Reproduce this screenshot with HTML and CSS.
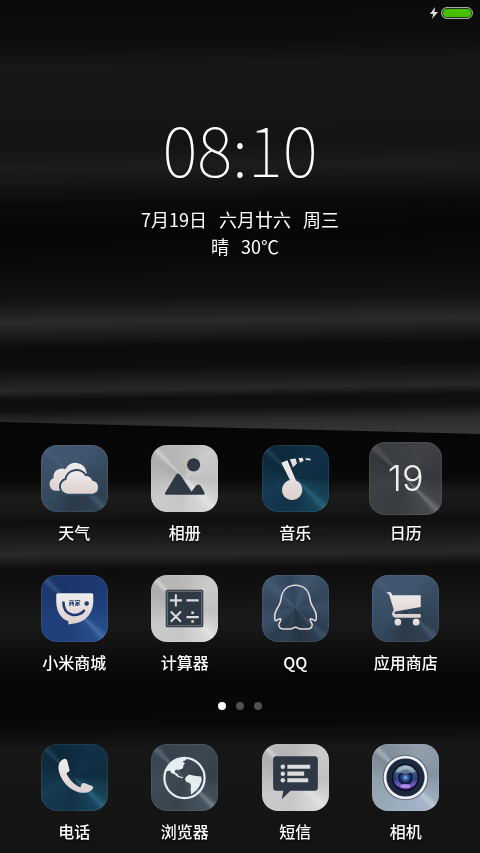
FILE: index.html
```html
<!DOCTYPE html>
<html lang="zh-CN">
<head>
    <meta charset="UTF-8">
    <meta name="viewport" content="width=device-width, initial-scale=1.0">
    <title>桌面</title>
    <link rel="stylesheet" href="styles.css">
</head>
<body>
    <svg class="wallpaper" viewBox="0 0 480 853" preserveAspectRatio="none" aria-hidden="true">
        <defs>
            <linearGradient id="folds" gradientUnits="userSpaceOnUse" x1="0" y1="0" x2="12" y2="856">
                <stop offset="0" stop-color="#0a0a0a"/>
                <stop offset=".05" stop-color="#0d0d0d"/>
                <stop offset=".08" stop-color="#171717"/>
                <stop offset=".13" stop-color="#171717"/>
                <stop offset=".17" stop-color="#131313"/>
                <stop offset=".197" stop-color="#1c1c1c"/>
                <stop offset=".22" stop-color="#131313"/>
                <stop offset=".24" stop-color="#0a0a0a"/>
                <stop offset=".27" stop-color="#060606"/>
                <stop offset=".31" stop-color="#0a0a0a"/>
                <stop offset=".35" stop-color="#121212"/>
                <stop offset=".378" stop-color="#2a2a2a"/>
                <stop offset=".392" stop-color="#1c1c1c"/>
                <stop offset=".408" stop-color="#0b0b0b"/>
                <stop offset=".43" stop-color="#0d0d0d"/>
                <stop offset=".445" stop-color="#1c1c1c"/>
                <stop offset=".457" stop-color="#272727"/>
                <stop offset=".468" stop-color="#0e0e0e"/>
                <stop offset=".48" stop-color="#111"/>
                <stop offset=".495" stop-color="#2c2c2c"/>
                <stop offset=".51" stop-color="#363636"/>
            </linearGradient>
            <linearGradient id="lowerFolds" gradientUnits="userSpaceOnUse" x1="0" y1="420" x2="4" y2="855">
                <stop offset="0" stop-color="#050505"/>
                <stop offset=".14" stop-color="#080808"/>
                <stop offset=".18" stop-color="#1b1b1b"/>
                <stop offset=".215" stop-color="#161616"/>
                <stop offset=".235" stop-color="#0f0f0f"/>
                <stop offset=".27" stop-color="#191919"/>
                <stop offset=".31" stop-color="#292929"/>
                <stop offset=".345" stop-color="#0d0d0d"/>
                <stop offset=".4" stop-color="#121212"/>
                <stop offset=".47" stop-color="#191919"/>
                <stop offset=".53" stop-color="#101010"/>
                <stop offset=".6" stop-color="#060606"/>
                <stop offset=".7" stop-color="#080808"/>
                <stop offset=".76" stop-color="#171717"/>
                <stop offset="1" stop-color="#131313"/>
            </linearGradient>
        </defs>
        <rect width="480" height="853" fill="url(#folds)"/>
        <path d="M0 422 Q240 428 480 434 V853 H0z" fill="url(#lowerFolds)"/>
    </svg>

    <header class="status-bar">
        <svg class="bolt" viewBox="0 0 8 12" aria-hidden="true"><path d="M5 0 0 7h3.200L2 12l6-7H4.500z"/></svg>
        <span class="battery"></span>
    </header>

    <main class="home">
        <section class="clock">
            <h1 class="time">08:10</h1>
            <p class="info"><span>7月19日</span><span>六月廿六</span><span>周三</span></p>
            <p class="info weather"><span>晴</span><span>30℃</span></p>
        </section>

        <section class="apps">
            <button type="button" class="app">
                <span class="tile slate">
                    <svg viewBox="0 0 66 66" aria-hidden="true">
                        <defs>
                            <linearGradient id="pearl" x1="0" y1="0" x2="0" y2="1">
                                <stop offset="0" stop-color="#eee"/>
                                <stop offset=".5" stop-color="#e8dede"/>
                                <stop offset="1" stop-color="#dccfd0"/>
                            </linearGradient>
                        </defs>
                        <path fill="url(#pearl)" d="M15 45a6.500 6.500 0 0 1-2.500-12.500a8 8 0 0 1 11.500-8.500a11 11 0 0 1 21 3.500L40 40 25 45z"/>
                        <path class="front-cloud" fill="url(#pearl)" d="M26.500 48a7 7 0 0 1-1.500-13.800a10 10 0 0 1 18.500-3.700a7 7 0 0 1 7 4.700a6.500 6.500 0 0 1 .5 12.800z"/>
                    </svg>
                </span>
                <span class="label">天气</span>
            </button>
            <button type="button" class="app">
                <span class="tile silver">
                    <svg viewBox="0 0 66 66" fill="#2e3945" aria-hidden="true">
                        <circle cx="42" cy="19.500" r="6.500"/>
                        <path d="M15 49q-2 0-1-2l10.500-17.500q2-3 4.500 0L40 46l4-5.500q2.500-3 5 0l3.500 6q1 2-1 2.500z"/>
                    </svg>
                </span>
                <span class="label">相册</span>
            </button>
            <button type="button" class="app">
                <span class="tile teal">
                    <svg viewBox="0 0 66 66" fill="url(#pearl)" aria-hidden="true">
                        <path d="M19 17.500l6-2.500 8.500 20a10 10 0 1 1-6-.5z"/>
                        <path d="M27.500 14l5.500-.8 1.500 5-4 4zM36 13l4-.5 1 3-3.500 2zM42.500 13l5 .2.500 2-4.500-.4z"/>
                    </svg>
                </span>
                <span class="label">音乐</span>
            </button>
            <button type="button" class="app">
                <span class="tile graphite calendar">19</span>
                <span class="label">日历</span>
            </button>
            <button type="button" class="app">
                <span class="tile blue">
                    <svg viewBox="0 0 66 66" aria-hidden="true">
                        <path fill="url(#pearl)" d="M16.500 18h33.500q1.500 0 1.500 1.500v6c0 13-9 21.500-20.500 22.500l-4 .8v-3.300C19 43 15 35 15 26v-6.500q0-1.500 1.500-1.500z"/>
                        <path class="smile" d="M22 26c0 16 16 16 21 8.500"/>
                        <circle cx="45" cy="28" r="2.200" fill="#1d3a70"/>
                        <text class="badge-text" x="33" y="30">商家</text>
                    </svg>
                </span>
                <span class="label">小米商城</span>
            </button>
            <button type="button" class="app">
                <span class="tile silver">
                    <svg viewBox="0 0 66 66" aria-hidden="true">
                        <rect x="14.500" y="14.500" width="37" height="37" rx="1.500" fill="#2e3945"/>
                        <rect x="16" y="16" width="34" height="34" fill="none" stroke="#8b9096" stroke-width=".7"/>
                        <g stroke="#dcdcdc" stroke-width="2" fill="none">
                            <path d="M18.500 25h12M24.500 19v12M35 25h12M19.500 36l10 10M29.500 36l-10 10M35 41.500h12"/>
                            <path d="M41 36v2.500M41 44.500V47" stroke-width="2.500"/>
                        </g>
                    </svg>
                </span>
                <span class="label">计算器</span>
            </button>
            <button type="button" class="app">
                <span class="tile slate rays">
                    <svg viewBox="0 0 66 66" fill="none" stroke="#e2d9da" stroke-width="1.500" stroke-linejoin="round" aria-hidden="true">
                        <path d="M33 10C26 10 19.500 14 18.500 25C18 30 13 34 12.500 40C12.500 43 12.500 45.500 14 45C15.500 44.500 16.500 43 18 43C19 43 18.500 45 17.500 46.500C15.500 49 16.500 53 21 53.300H28C30 53.300 31 51.500 33 51.500C35 51.500 36 53.300 38 53.300H45C49.500 53 50.500 49 48.500 46.500C47.500 45 47 43 48 43C49.500 43 50.500 44.500 52 45C53.500 45.500 53.500 43 53.500 40C53 34 48 30 47.500 25C46.500 14 40 10 33 10z"/>
                    </svg>
                </span>
                <span class="label">QQ</span>
            </button>
            <button type="button" class="app">
                <span class="tile slate">
                    <svg viewBox="0 0 66 66" fill="url(#pearl)" aria-hidden="true">
                        <path d="M14 17h4.500l1.500 3h28v11.500L23 36q-2 1.500 0 2.500h25V42H23q-4-1-3-5l1.500-2.500L17 19.500z"/>
                        <circle cx="25.500" cy="46.500" r="3.300"/>
                        <circle cx="43.500" cy="46.500" r="3.300"/>
                    </svg>
                </span>
                <span class="label">应用商店</span>
            </button>
        </section>

        <nav class="pages" aria-label="页面">
            <span class="dot active"></span>
            <span class="dot"></span>
            <span class="dot"></span>
        </nav>
    </main>

    <footer class="dock">
        <button type="button" class="app">
            <span class="tile teal">
                <svg viewBox="0 0 66 66" fill="url(#pearl)" aria-hidden="true">
                    <path d="M23.500 14.500C18 16 16.500 21 17.500 26C20 38 31 48 42 48C47 48 50 46 51.500 43Q51.500 41.500 49 41L42.500 38.500Q40 38 39 42.500C33.500 41 27.500 35 25 28.500Q29 27 28 25L26 17Q25 14 23.500 14.500z"/>
                </svg>
            </span>
            <span class="label">电话</span>
        </button>
        <button type="button" class="app">
            <span class="tile steel">
                <svg viewBox="0 0 66 66" fill="#e6edf1" aria-hidden="true">
                    <circle cx="33" cy="33.500" r="19.800" fill="none" stroke="#e6edf1" stroke-width="2.200"/>
                    <path d="M15 27l2-6 5-5 5-2 8 .5-1 1.500-3 1.500 2.500 1.500-1.500 2-.5 3-4 1.500-2-.3-2 1 .5 2.300 2 .5 1.500 2.500 4 1.200-.3 1-5-1.200-2.700-2.500-3.500-1.500-1.500-2.500z"/>
                    <path d="M34.500 32.500l3-2.500 4 1 3 .5 5 .5.500 4-2.500 6-3.500 4-4.500 4-.5-6 .5-3-1-2.500-3.500-1-1.500-2.500z"/>
                </svg>
            </span>
            <span class="label">浏览器</span>
        </button>
        <button type="button" class="app">
            <span class="tile silver">
                <svg viewBox="0 0 66 66" aria-hidden="true">
                    <path fill="#2e3945" d="M14 12h38q3 0 3 3v28q0 3-3 3H28l-8.500 8.500L21 46h-7q-3 0-3-3V15q0-3 3-3z"/>
                    <g fill="#dcdcdc">
                        <circle cx="20.500" cy="22.500" r="2.200"/>
                        <circle cx="20.500" cy="29.200" r="2.200"/>
                        <circle cx="20.500" cy="35.700" r="2.200"/>
                        <path d="M25 20.500h22.500v4H25zM25 27.200h16.500v4H25zM25 33.700h20.500v4H25z"/>
                    </g>
                </svg>
            </span>
            <span class="label">短信</span>
        </button>
        <button type="button" class="app">
            <span class="tile ice">
                <svg viewBox="0 0 66 66" aria-hidden="true">
                    <defs>
                        <linearGradient id="glass" x1="0" y1="0" x2="0" y2="1">
                            <stop offset="0" stop-color="#a7c0cf"/>
                            <stop offset=".35" stop-color="#31526f"/>
                            <stop offset=".55" stop-color="#263c80"/>
                            <stop offset=".8" stop-color="#7658c8"/>
                            <stop offset="1" stop-color="#31206a"/>
                        </linearGradient>
                        <radialGradient id="iris">
                            <stop offset="0" stop-color="#72bde8"/>
                            <stop offset=".5" stop-color="#315a9f"/>
                            <stop offset="1" stop-color="#18204d"/>
                        </radialGradient>
                    </defs>
                    <circle cx="33" cy="33" r="22.500" fill="#586273"/>
                    <circle cx="33" cy="33" r="21.500" fill="#eef0f3"/>
                    <circle cx="33" cy="33" r="18.800" fill="#1c2740"/>
                    <circle cx="33" cy="33" r="13.500" fill="#0b1020"/>
                    <circle cx="33" cy="33" r="12" fill="url(#glass)"/>
                    <circle cx="33" cy="33" r="8" fill="#171c46" stroke="#5465aa" stroke-width=".8"/>
                    <circle cx="33" cy="33" r="5.500" fill="url(#iris)"/>
                    <path d="M23 27q10-10 20 0-10 4-20 0z" fill="#c5dce4" opacity=".45"/>
                    <ellipse cx="33" cy="41.500" rx="5" ry="2" fill="#c59af4" opacity=".8"/>
                </svg>
            </span>
            <span class="label">相机</span>
        </button>
    </footer>
</body>
</html>
```
FILE: styles.css
```css
* {
    box-sizing: border-box;
}

body {
    margin: 0;
    min-height: 100vh;
    display: flex;
    flex-direction: column;
    background-color: #0a0a0a;
    color: #fff;
    font-family: "Noto Sans CJK SC", sans-serif;
}

.wallpaper {
    position: fixed;
    top: 0;
    left: 0;
    width: 100%;
    height: 100%;
    z-index: -1;
}

.status-bar {
    display: flex;
    justify-content: flex-end;
    align-items: center;
    gap: 3px;
    height: 26px;
    padding: 0 7px;
}

.bolt {
    width: 8px;
    height: 12px;
    fill: #ddd;
}

.battery {
    width: 32px;
    height: 12px;
    border: 1px solid #aaa;
    border-radius: 6px;
    background-color: #47c000;
    box-shadow: inset 0 0 0 1px #283020;
}

.home {
    flex: 1;
    display: flex;
    flex-direction: column;
}

.clock {
    padding-top: 84px;
    text-align: center;
}

.time {
    margin: 0 0 20px;
    font-size: 67px;
    font-weight: 100;
    line-height: 76px;
}

.info {
    display: flex;
    justify-content: center;
    gap: 12px;
    margin: 0;
    font-size: 18px;
    font-weight: 400;
    line-height: 27px;
}

.weather {
    padding-left: 10px;
}

.apps,
.dock {
    display: grid;
    grid-template-columns: repeat(4, 1fr);
    padding: 0 19px;
}

.apps {
    row-gap: 31px;
    margin-top: auto;
}

.dock {
    padding-bottom: 10px;
}

.app {
    display: flex;
    flex-direction: column;
    align-items: center;
    gap: 8px;
    padding: 0;
    border: 0;
    background: none;
    color: inherit;
    font-family: inherit;
    cursor: pointer;
}

.label {
    font-size: 16px;
    font-weight: 500;
    line-height: 24px;
    text-shadow: 0 1px 2px #000;
}

.tile {
    display: block;
    width: 67px;
    height: 67px;
    border-radius: 16px;
    box-shadow: inset 0 0 1px 1px rgba(255, 255, 255, 0.08);
}

.tile svg {
    display: block;
    width: 100%;
    height: 100%;
}

/* brushed metal finishes */
.slate {
    background: conic-gradient(from 135deg, #41566b, #2f4051 8deg, #2b3a49 50deg, #364b60 100deg, #3d536b 172deg, #465c74 180deg, #3f566e 188deg, #40566e 250deg, #34495d 300deg, #2e4051 350deg, #41566b);
}

.rays {
    background: conic-gradient(from 135deg, #3c5064, #2c3d4f 8deg, #263545 40deg, #2f4154 65deg, #2b3b4c 80deg, #3b5067 110deg, #33465b 145deg, #3b526a 172deg, #445a71 180deg, #3a5067 188deg, #30445a 215deg, #40566e 245deg, #334659 290deg, #3a4f65 310deg, #2c3e50 350deg, #3c5064);
}

.silver {
    background: conic-gradient(from 135deg, #e2e2e2, #d6d6d6 12deg, #c6c6c6 55deg, #cbcbcb 100deg, #adadad 165deg, #b0b0b0 173deg, #cecece 180deg, #b5b5b5 187deg, #b9b8b6 225deg, #cbcbcb 270deg, #c0c0c0 320deg, #d2d2d2 348deg, #e2e2e2);
}

.teal {
    background: conic-gradient(from 135deg, #286079, #17445a 9deg, #123247 50deg, #153a52 110deg, #0d2839 172deg, #1c4056 180deg, #0d2839 188deg, #123047 260deg, #0f2c40 310deg, #184559 350deg, #286079);
}

.blue {
    background: conic-gradient(from 135deg, #446ba6, #264c8a 9deg, #1e3f78 60deg, #203f7b 120deg, #1c376a 172deg, #2f5189 180deg, #1b3567 188deg, #1c386d 260deg, #1f4280 320deg, #264d8b 350deg, #446ba6);
}

.graphite {
    background: conic-gradient(from 135deg, #6c6f73, #45484d 8deg, #383b40 60deg, #3d4045 120deg, #33363a 172deg, #505255 180deg, #393c40 188deg, #404246 260deg, #34373c 310deg, #44474b 352deg, #6c6f73);
}

.steel {
    background: conic-gradient(from 135deg, #6d7c87, #44525d 8deg, #37444e 60deg, #3e4a54 120deg, #384650 172deg, #566571 180deg, #35424c 188deg, #3c4851 260deg, #32404b 310deg, #41505b 352deg, #6d7c87);
}

.ice {
    background: conic-gradient(from 135deg, #bac7d5, #a5b4c6 9deg, #9cadbf 60deg, #91a0ad 130deg, #7b8995 172deg, #a3afba 180deg, #7f8d99 188deg, #929fab 250deg, #8493a2 310deg, #9dadbc 352deg, #bac7d5);
}

.calendar {
    width: 73px;
    height: 73px;
    margin: -3px 0;
    font-family: Inter, sans-serif;
    font-size: 36px;
    font-weight: 300;
    line-height: 73px;
    text-align: center;
    color: #f0f0f0;
}

.front-cloud {
    stroke: #33485d;
    stroke-width: 4;
    paint-order: stroke;
}

.smile {
    fill: none;
    stroke: #1d3a70;
    stroke-width: 2.5;
}

.badge-text {
    font-size: 6px;
    font-weight: 700;
    text-anchor: middle;
    fill: #1d3a70;
}

.pages {
    display: flex;
    justify-content: center;
    gap: 10px;
    padding: 28px 0 34px;
}

.dot {
    width: 8px;
    height: 8px;
    border-radius: 50%;
    background-color: #505050;
}

.dot.active {
    background-color: #fff;
}
```
